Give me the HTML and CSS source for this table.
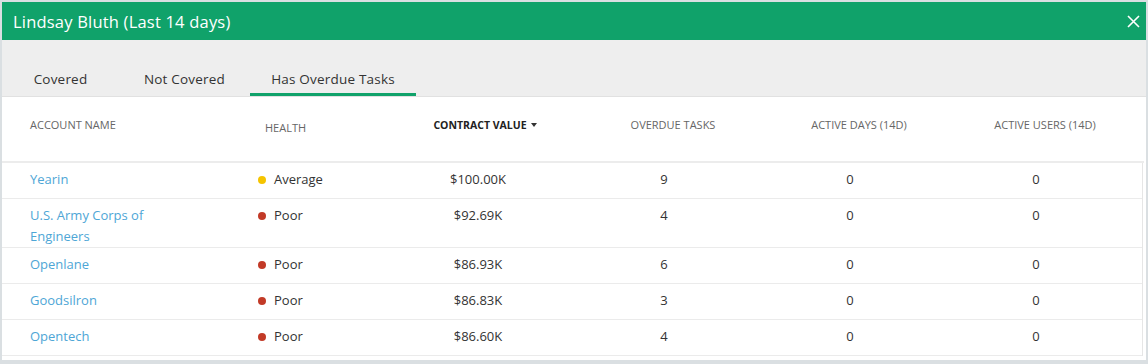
FILE: index.html
```html
<!DOCTYPE html>
<html>
<head>
<meta charset="utf-8">
<link rel="stylesheet" href="styles.css">
</head>
<body>
<div class="modal">
  <div class="modal-header">
    <div class="title">Lindsay Bluth (Last 14 days)</div>
    <svg class="close" width="13" height="13" viewBox="0 0 13 13"><path d="M1 1L12 12M12 1L1 12" stroke="#fff" stroke-width="1.6" fill="none"/></svg>
  </div>
  <div class="tabs">
    <div class="tab tab-1">Covered</div>
    <div class="tab tab-2">Not Covered</div>
    <div class="tab tab-3 active">Has Overdue Tasks</div>
  </div>
  <div class="table">
    <div class="thead">
      <div class="th c-name">ACCOUNT NAME</div>
      <div class="th c-health health-h">HEALTH</div>
      <div class="th c-num sorted">CONTRACT VALUE <span class="caret"></span></div>
      <div class="th c-num pad">OVERDUE TASKS</div>
      <div class="th c-num pad">ACTIVE DAYS (14D)</div>
      <div class="th c-num pad">ACTIVE USERS (14D)</div>
    </div>
    <div class="tbody">
      <div class="tr">
        <div class="td c-name"><a class="link">Yearin</a></div>
        <div class="td c-health"><span class="dot avg"></span>Average</div>
        <div class="td c-num">$100.00K</div>
        <div class="td c-num">9</div>
        <div class="td c-num">0</div>
        <div class="td c-num">0</div>
      </div>
      <div class="tr">
        <div class="td c-name"><a class="link">U.S. Army Corps of Engineers</a></div>
        <div class="td c-health"><span class="dot poor"></span>Poor</div>
        <div class="td c-num">$92.69K</div>
        <div class="td c-num">4</div>
        <div class="td c-num">0</div>
        <div class="td c-num">0</div>
      </div>
      <div class="tr">
        <div class="td c-name"><a class="link">Openlane</a></div>
        <div class="td c-health"><span class="dot poor"></span>Poor</div>
        <div class="td c-num">$86.93K</div>
        <div class="td c-num">6</div>
        <div class="td c-num">0</div>
        <div class="td c-num">0</div>
      </div>
      <div class="tr">
        <div class="td c-name"><a class="link">Goodsilron</a></div>
        <div class="td c-health"><span class="dot poor"></span>Poor</div>
        <div class="td c-num">$86.83K</div>
        <div class="td c-num">3</div>
        <div class="td c-num">0</div>
        <div class="td c-num">0</div>
      </div>
      <div class="tr">
        <div class="td c-name"><a class="link">Opentech</a></div>
        <div class="td c-health"><span class="dot poor"></span>Poor</div>
        <div class="td c-num">$86.60K</div>
        <div class="td c-num">4</div>
        <div class="td c-num">0</div>
        <div class="td c-num">0</div>
      </div>
    </div>
  </div>
</div>
</body>
</html>
```
FILE: styles.css
```css
* { box-sizing: border-box; }
html, body { margin: 0; padding: 0; }
body {
  background: #dadfe2;
  font-family: "Open Sans", "Noto Sans", sans-serif;
  color: #333;
  width: 1148px;
  height: 364px;
  overflow: hidden;
}
.modal {
  margin: 2px 2px 0 2px;
  width: 1144px;
  height: 358px;
  background: #fff;
  overflow: hidden;
}
.modal-header {
  height: 38px;
  background: #10a26a;
  display: flex;
  align-items: center;
  justify-content: space-between;
  padding: 0 6px 0 11px;
}
.title {
  color: #fff;
  font-size: 16.5px;
  letter-spacing: 0.2px;
}
.tabs {
  height: 57px;
  background: #eeeeee;
  border-bottom: 1px solid #e1e1e1;
  display: flex;
  align-items: flex-end;
}
.tab {
  height: 38px;
  font-size: 13.5px;
  letter-spacing: 0.2px;
  color: #333;
  text-align: center;
  padding-top: 12px;
  border-bottom: 3px solid transparent;
}
.tab-1 { width: 117px; }
.tab-2 { width: 131px; }
.tab-3 { width: 166px; }
.tab.active { border-bottom-color: #10a26a; }

.thead {
  height: 66px;
  display: flex;
  align-items: flex-start;
  padding-top: 22px;
  border-bottom: 2px solid #ececec;
  margin-right: 2px;
}
.th {
  font-size: 11px;
  color: #666;
  line-height: 12px;
  white-space: nowrap;
}
.th.sorted { color: #222; font-weight: 700; display: flex; align-items: center; justify-content: center; gap: 4px; padding-left: 14px; font-size: 10.5px; }
.th.pad { padding-left: 18px; }
.health-h { padding-top: 3px; padding-left: 15px; }
.caret {
  display: inline-block;
  width: 0; height: 0;
  border-left: 3.5px solid transparent;
  border-right: 3.5px solid transparent;
  border-top: 4px solid #333;
}
.c-name { width: 248px; padding-left: 28px; }
.c-health { width: 135px; }
.c-num { width: 186px; text-align: center; }

.tbody {
  margin-right: 2px;
  border-right: 1px solid #e6e6e6;
  width: 1141px;
}
.tr {
  display: flex;
  align-items: flex-start;
  min-height: 36px;
  padding-top: 6px;
  border-bottom: 1px solid #ebebeb;
  font-size: 13px;
  line-height: 21px;
}
.td.c-name { padding-right: 80px; }
.td.c-health { display: flex; align-items: center; padding-left: 8px; }
.link { color: #4ea6d6; text-decoration: none; }
.dot {
  width: 8px; height: 8px;
  border-radius: 50%;
  margin-right: 8px;
  display: inline-block;
}
.dot.avg { background: #f5c400; }
.dot.poor { background: #c23a27; }
```
